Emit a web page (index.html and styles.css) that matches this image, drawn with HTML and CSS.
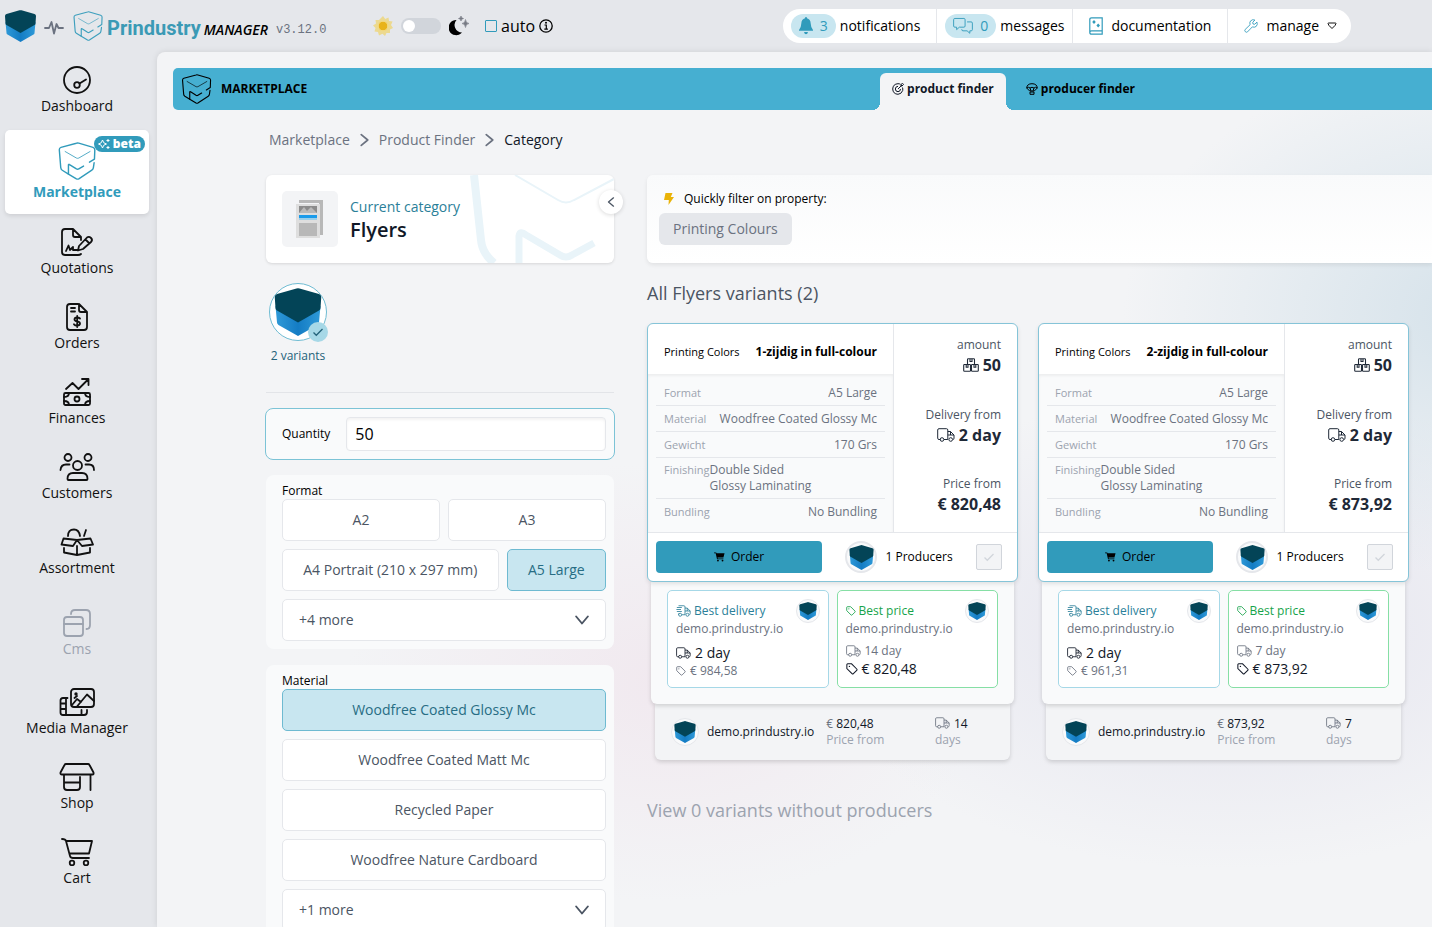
FILE: index.html
```html
<!DOCTYPE html>
<html lang="en">
<head>
    <meta charset="UTF-8">
    <meta name="viewport" content="width=device-width, initial-scale=1.0">
    <title>Prindustry Manager - Marketplace</title>
    <link rel="stylesheet" href="styles.css">
</head>
<body>
    <!-- shared icons -->
    <svg class="sprite" aria-hidden="true">
        <defs>
            <linearGradient id="blue" x1="0" y1="0" x2="1" y2="0">
                <stop offset="0" stop-color="#2f9ad8"/>
                <stop offset="0.5" stop-color="#147cc4"/>
                <stop offset="1" stop-color="#2f9ad8"/>
            </linearGradient>
        </defs>
        <symbol id="cube" viewBox="0 0 32 32">
            <path d="M1 12 L16 19 L31 12 L30 23 Q30 24 29 24.600 L16 32 L3 24.600 Q2 24 2 23 Z" fill="url(#blue)"/>
            <path d="M15 .3 Q16 0 17 .3 L30 4 Q31.500 4.500 31.500 6 L31 13.500 Q31 14.500 30 15 L16 23 L2 15 Q1 14.500 1 13.500 L.5 6 Q.5 4.500 2 4 Z" fill="#034457"/>
        </symbol>
        <symbol id="outline" viewBox="0 0 32 32">
            <g fill="none" stroke="currentColor" stroke-linejoin="round" stroke-linecap="round">
                <path d="M26.500 17 L30.700 14.500 L31 6.500 Q31 5 29.500 4.500 L17.500 1 Q16.500 .7 15.500 1 L2.500 4.500 Q1 5 1.100 6.500 L2.300 21.500 Q2.400 23 3.600 23.800 L8.800 27 V19.200 Q9 18.500 9.700 19 L15.500 22.700 Q16.500 23.300 17.500 22.700 L21.500 20.300" stroke-width="1.200"/>
                <path d="M30.400 17.500 L29.800 21.500 Q29.600 23 28.500 23.700 L17.500 31 Q16.500 31.500 15.500 31 L8.800 27" stroke-width="1.200"/>
                <path d="M6 8 L15.500 13.500 Q16.500 14 17.500 13.500 L27 8" stroke-width=".7"/>
            </g>
        </symbol>
        <symbol id="truck" viewBox="0 0 18 14">
            <path d="M3.500 11.500 H2 Q.7 11.500 .7 10.200 V2 Q.7 .7 2 .7 H9.500 Q10.800 .7 10.800 2 V11.500 H7 M10.800 3.500 H13.500 L17 7 V10.200 Q17 11.500 16 11.500 M10.800 7 H17 M13.500 3.500 V7" fill="none" stroke="currentColor"/>
            <circle cx="5" cy="11.500" r="1.800" fill="none" stroke="currentColor"/>
            <circle cx="13.700" cy="11.500" r="1.800" fill="none" stroke="currentColor"/>
        </symbol>
        <symbol id="fast" viewBox="0 0 18 14">
            <path d="M3 11.500 V10 M3 .7 H9.500 Q10.800 .7 10.800 2 V11.500 H7 M10.800 3.500 H13.500 L17 7 V10.200 Q17 11.500 16 11.500 M10.800 7 H17 M13.500 3.500 V7 M1 2.800 H7 M.5 5.200 H6 M1 7.600 H7" fill="none" stroke="currentColor"/>
            <circle cx="5" cy="11.500" r="1.800" fill="none" stroke="currentColor"/>
            <circle cx="13.700" cy="11.500" r="1.800" fill="none" stroke="currentColor"/>
        </symbol>
        <symbol id="tag" viewBox="0 0 14 14">
            <path d="M1 2 Q1 1 2 1 H6.500 L12.500 7 Q13.300 7.800 12.500 8.600 L8.600 12.500 Q7.800 13.300 7 12.500 L1 6.500 Z" fill="none" stroke="currentColor" stroke-width="1.200"/>
            <circle cx="4" cy="4" r=".8" fill="currentColor"/>
        </symbol>
        <symbol id="boxes" viewBox="0 0 16 14">
            <path d="M4.500 6 V1.500 Q4.500 .7 5.300 .7 H10.700 Q11.500 .7 11.500 1.500 V6 M7 .7 V3.500 H9 V.7 M1.500 6.500 H6.700 Q7.500 6.500 7.500 7.300 V12.500 Q7.500 13.300 6.700 13.300 H1.500 Q.7 13.300 .7 12.500 V7.300 Q.7 6.500 1.500 6.500 Z M3.200 6.500 V9.200 H5 V6.500 M9.300 6.500 H14.500 Q15.300 6.500 15.300 7.300 V12.500 Q15.300 13.300 14.500 13.300 H9.300 Q8.500 13.300 8.500 12.500 V7.300 Q8.500 6.500 9.300 6.500 Z M11 6.500 V9.200 H12.800 V6.500" fill="none" stroke="currentColor" stroke-width="1.100"/>
        </symbol>
        <symbol id="cart-solid" viewBox="0 0 12 10">
            <path d="M0 0 H2.400 L2.800 1 H11.500 L10.300 5.500 H3.900 L4.100 6.500 H10.300 V7.400 H3.300 L1.800 1 H0 Z" fill="currentColor"/>
            <circle cx="4.300" cy="8.900" r="1" fill="currentColor"/>
            <circle cx="9.300" cy="8.900" r="1" fill="currentColor"/>
        </symbol>
        <symbol id="check" viewBox="0 0 12 12">
            <path d="M1.500 6.500 L4.300 9.300 L10.500 3" fill="none" stroke="currentColor" stroke-width="1.300"/>
        </symbol>
        <symbol id="chevron" viewBox="0 0 12 12">
            <path d="M3 1 L9 6 L3 11" fill="none" stroke="currentColor" stroke-width="1.600" stroke-linecap="round" stroke-linejoin="round"/>
        </symbol>
    </svg>

    <header class="topbar">
        <div class="brand">
            <svg class="brand-cube"><use href="#cube"/></svg>
            <svg class="pulse" viewBox="0 0 20 16"><path d="M1 9 H5 L7.500 3 L10 14.500 L12.500 5 L14.500 9 H19" fill="none" stroke="currentColor" stroke-width="1.800" stroke-linejoin="round" stroke-linecap="round"/></svg>
            <svg class="brand-outline"><use href="#outline"/></svg>
            <span class="brand-name">Prindustry</span>
            <span class="brand-manager">MANAGER</span>
            <span class="version">v3.12.0</span>
        </div>
        <div class="theme">
            <svg class="sun" viewBox="0 0 20 20"><path d="M10 0 L12.200 3 L15.500 1.500 L16 5 L19.600 5.500 L18 9 L20 12 L17 13.500 L17 17 L13.500 17 L12 20 L9.500 17.700 L6 19.500 L5 16 L1.500 15.500 L2.500 12 L0 9.500 L3 7.500 L2.500 4 L6 4 Z" fill="#ecd98f"/><circle cx="10" cy="10" r="4.800" fill="#e8b31a" stroke="#f4dc88"/></svg>
            <input class="switch" type="checkbox" role="switch" aria-label="Dark mode">
            <svg class="moon" viewBox="0 0 20 20"><path d="M7.500 4 A7.600 7.600 0 1 0 13 16.500 A7.500 7.500 0 0 1 7.500 4 Z" fill="#000"/><path d="M16.500 3.500 Q16.800 7.200 20 7.500 Q16.800 7.800 16.500 11.500 Q16.200 7.800 13 7.500 Q16.200 7.200 16.500 3.500 Z M12 0 Q12.200 2.300 14.500 2.500 Q12.200 2.700 12 5 Q11.800 2.700 9.500 2.500 Q11.800 2.300 12 0 Z" fill="#777b84" stroke="#777b84" stroke-width=".6"/></svg>
            <label class="auto"><input type="checkbox">auto</label>
            <svg class="info" viewBox="0 0 14 14"><circle cx="7" cy="7" r="6.200" fill="none" stroke="#000" stroke-width="1.300"/><path d="M5.500 6 H7.300 V10 M5.300 10.200 H8.900" fill="none" stroke="#000" stroke-width="1.200"/><circle cx="7" cy="3.800" r="1" fill="#000"/></svg>
        </div>
        <nav class="tools">
            <a href="#" class="tool">
                <span class="count"><svg class="bell" viewBox="0 0 14 18"><path d="M7 0 Q8 0 8 1.300 Q11.500 2.300 11.700 6.500 Q11.900 11 14 13 V13.800 H0 V13 Q2.100 11 2.300 6.500 Q2.500 2.300 6 1.300 Q6 0 7 0 Z M5 15 H9 Q8.500 17.300 7 17.300 Q5.500 17.300 5 15 Z" fill="currentColor"/></svg>3</span>notifications
            </a>
            <a href="#" class="tool">
                <span class="count"><svg class="chat" viewBox="0 0 22 18"><path d="M2 .7 H12 Q13.300 .7 13.300 2 V9 Q13.300 10.300 12 10.300 H7 L4 13 V10.300 H2 Q.7 10.300 .7 9 V2 Q.7 .7 2 .7 Z M15.500 4.500 H20 Q21.300 4.500 21.300 5.800 V13 Q21.300 14.300 20 14.300 H18.500 V17 L15.500 14.300 H11 Q9.700 14.300 9.700 13 V12.500" fill="none" stroke="currentColor" stroke-linejoin="round"/></svg>0</span>messages
            </a>
            <a href="#" class="tool wide">
                <svg class="book" viewBox="0 0 14 18"><path d="M2.500 .8 H13.200 V17.200 H2.500 Q.8 17.200 .8 15.500 V2.500 Q.8 .8 2.500 .8 Z M.8 15.500 Q.8 13.800 2.500 13.800 H13.200" fill="none" stroke="currentColor" stroke-width="1.200"/><path d="M5 3 L6.800 5 L5 7 L3.200 5 Z M9.200 6.500 L11 8.500 L9.200 10.500 L7.400 8.500 Z" fill="currentColor"/></svg>documentation
            </a>
            <a href="#" class="tool wide">
                <svg class="wrench" viewBox="0 0 16 16"><path d="M14.800 3.500 L12.300 6 L10.300 5.700 L10 3.700 L12.500 1.200 Q9.500 0 7.500 2.200 Q6 4 7 6.500 L1.300 12 Q.3 13.200 1.500 14.500 Q2.800 15.700 4 14.700 L9.500 9 Q12 10 13.900 8.500 Q15.900 6.500 14.800 3.500 Z" fill="none" stroke="currentColor"/></svg>manage
                <svg class="caret" viewBox="0 0 10 8"><path d="M1 1.500 Q1 1 1.500 1 H8.500 Q9 1 9 1.500 Q9 3 5 6.500 Q1 3 1 1.500 Z" fill="none" stroke="#111"/></svg>
            </a>
        </nav>
    </header>

    <div class="layout">
        <nav class="sidebar">
            <a href="#" class="item"><svg viewBox="0 0 36 28"><circle cx="18" cy="14" r="13"/><circle cx="18" cy="19" r="2.800"/><path d="M20.500 17.500 L27 13.500"/></svg>Dashboard</a>
            <a href="#" class="item active"><span class="beta"><svg viewBox="0 0 12 12"><path d="M4.500 2 Q5 5.500 8.500 6 Q5 6.500 4.500 10 Q4 6.500 .5 6 Q4 5.500 4.500 2 Z M10 1 V4 M8.500 2.500 H11.500 M10 8 V11 M8.500 9.500 H11.500"/></svg>beta</span><svg class="market"><use href="#outline"/></svg>Marketplace</a>
            <a href="#" class="item"><svg viewBox="0 0 36 28"><path d="M22 26 Q21 27 19 27 H6 Q3 27 3 24 V4 Q3 1 6 1 H14 L22 9 V12 M14 1 V7 Q14 9 16 9 H22"/><path d="M20 18 L28 9.500 Q30 8 32 10 Q34 12 32 14 L24 21 L19 22.500 Z M26.500 11.500 L30 15"/><path d="M7 23 L9.500 17.500 L11 22 L14 19 V22 H19"/></svg>Quotations</a>
            <a href="#" class="item"><svg viewBox="0 0 36 28"><path d="M19 1 H11 Q8 1 8 4 V24 Q8 27 11 27 H25 Q28 27 28 24 V9 L20 1 V7 Q20 9 22 9 H28 M12 5 H16 M12 8.500 H16"/><path d="M21 15.500 Q20 14.500 18 14.500 Q15.500 14.500 15.500 16.500 Q15.500 18 18.300 18.300 Q21 18.700 21 20.500 Q21 22.500 18 22.500 Q16 22.500 15 21.300 M18.200 13 V24"/></svg>Orders</a>
            <a href="#" class="item"><svg viewBox="0 0 36 28"><path d="M7 11 L13.500 5 L19.500 11 L29 1.500 M23 1 H29.500 V7"/><rect x="5" y="15" width="26" height="12" rx="1.500"/><circle cx="18" cy="21" r="2.500"/><path d="M10 15 Q10 19 5 19 M10 27 Q10 23 5 23 M26 15 Q26 19 31 19 M26 27 Q26 23 31 23"/></svg>Finances</a>
            <a href="#" class="item"><svg viewBox="0 0 36 28"><circle cx="9" cy="4.500" r="3.500"/><circle cx="29" cy="4.500" r="3.500"/><circle cx="18.500" cy="12.500" r="4.500"/><path d="M8.500 26 Q8.500 20 14 20 H23 Q28.500 20 28.500 26 Q28.500 27 27.500 27 H9.500 Q8.500 27 8.500 26 Z M1.500 17 Q2 11.500 7 11.500 H10.500 M26.500 11.500 H30 Q35 11.500 35 17"/></svg>Customers</a>
            <a href="#" class="item"><svg viewBox="0 0 36 28"><path d="M18 12 L14 18 L2.500 16.500 L4.500 10.500 Z M18 12 L23 18 L34 16.500 L31.500 10.500 Z M5 20 V24.500 L18 27 L31 24.500 V20 M18 18 V27 M9 8 Q9 1.500 15 1.500 Q20 1.500 21 8 M25 8 L27 2"/></svg>Assortment</a>
            <a href="#" class="item cms"><svg viewBox="0 0 36 28"><rect x="5" y="8" width="19" height="19" rx="3"/><path d="M5 15 H24 M12 5 Q12 1 16 1 H27 Q31 1 31 5 V16 Q31 20 27.500 20"/></svg>Cms</a>
            <a href="#" class="item media"><svg viewBox="0 0 36 28"><rect x="12" y="1" width="23" height="18" rx="3"/><path d="M13 17 L18 11 L22 14 M18 18.500 L28 6.500 L35 13 M15.500 10 L18 8 M8.500 10 H4 Q1.500 10 1.500 12.500 V24.500 Q1.500 27 4 27 H25 Q28 27 28 24 V22 M7 10 V27 M1.500 15.500 H7 M1.500 21 H7 M22.500 22 V27"/><circle cx="17" cy="6" r=".8"/></svg>Media Manager</a>
            <a href="#" class="item"><svg viewBox="0 0 36 28"><path d="M7 1 H29 Q30 1 30.500 2 L34.500 9.500 Q35 11.500 33.500 11.500 H3 Q1 11.500 1.500 9.500 L5.500 2 Q6 1 7 1 Z M5 12 V24 Q5 27 8 27 H18 Q21 27 21 24 V14 M5 19.500 H21 M31.500 12 V27"/></svg>Shop</a>
            <a href="#" class="item"><svg viewBox="0 0 36 28"><path d="M3 1 Q6.500 1 7 3 L11 18 Q11.500 20 14 20 H30 M7.500 3 H33 L30 15.500 H10.500"/><circle cx="13" cy="25" r="2.300"/><circle cx="27" cy="25" r="2.300"/></svg>Cart</a>
        </nav>

        <main class="main">
            <div class="banner">
                <div class="banner-title"><svg><use href="#outline"/></svg>MARKETPLACE</div>
                <div class="tabs">
                    <a href="#" class="tab current"><svg viewBox="0 0 12 12"><path d="M10.500 4.500 Q11 6 10.700 7.500 Q9.500 11 6 11.300 Q1 11 .7 6 Q1 1 6 .7 Q7.500 .7 8.500 1.300 M8.500 6 Q8.500 8.500 6 8.700 Q3.400 8.500 3.300 6 Q3.500 3.500 6 3.300 M6 6 L10 2 M9 3 V1.500 L10.500 .3 L11.500 1.500 L10 3 Z"/></svg>product finder</a>
                    <a href="#" class="tab"><svg viewBox="0 0 12 12"><path d="M.7 5 Q1 .7 6 .7 Q11 .7 11.300 5 L8.300 8 H3.700 Z M.7 5 Q3 3.500 4 5 Q6 3.500 8 5 Q9.500 3.500 11.300 5 M4 5 L5 8 M8 5 L7 8 M4 9 H8 V11.300 H4 Z"/></svg>producer finder</a>
                </div>
            </div>

            <div class="content">
                <div class="crumbs">
                    <a href="#">Marketplace</a>
                    <svg><use href="#chevron"/></svg>
                    <a href="#">Product Finder</a>
                    <svg><use href="#chevron"/></svg>
                    <span>Category</span>
                </div>

                <div class="columns">
                    <aside class="filters">
                        <div class="category-wrap">
                            <div class="category">
                                <svg class="watermark" viewBox="0 0 144 88"><path d="M4 0 L11 65 Q12 78 24 88" fill="none" stroke="#e9f4f9" stroke-width="8"/><path d="M45 0 L88 25 Q96 30 104 25 L144 4" fill="none" stroke="#e9f4f9" stroke-width="2"/><path d="M49 90 V61 Q50 55 56 60 L90 80 Q96 84 102 80 L124 68" fill="none" stroke="#e9f4f9" stroke-width="7"/></svg>
                                <div class="thumb"><svg viewBox="0 0 28 38"><path d="M3 0 H27 V35 H23 V3 H3 Z" fill="#b8b8b8"/><rect y="4" width="24" height="34" fill="#dedede"/><rect x="3" y="6" width="18" height="7" fill="#8b8b8b"/><path d="M3 13 L8 7 L11 11 L15 7 L21 13 Z" fill="#b9b9b9"/><rect x="3" y="15" width="18" height="3" fill="#1a9bea"/><rect x="3" y="18" width="18" height="2" fill="#9ccfe9"/><rect x="3" y="23" width="18" height="13" fill="#b8b8b8"/></svg></div>
                                <div>
                                    <div class="category-label">Current category</div>
                                    <h1>Flyers</h1>
                                </div>
                            </div>
                            <button class="collapse" aria-label="Collapse"><svg><use href="#chevron"/></svg></button>
                        </div>

                        <button class="producer">
                            <span class="producer-logo"><svg><use href="#cube"/></svg><span class="tick"><svg><use href="#check"/></svg></span></span>
                            2 variants
                        </button>

                        <div class="quantity">
                            <label for="quantity">Quantity</label>
                            <input id="quantity" type="text" value="50">
                        </div>

                        <section class="panel">
                            <h2>Format</h2>
                            <div class="options">
                                <button>A2</button>
                                <button>A3</button>
                                <button>A4 Portrait (210 x 297 mm)</button>
                                <button class="selected">A5 Large</button>
                                <button class="more">+4 more<svg><use href="#chevron"/></svg></button>
                            </div>
                        </section>

                        <section class="panel">
                            <h2>Material</h2>
                            <div class="options">
                                <button class="full selected">Woodfree Coated Glossy Mc</button>
                                <button class="full">Woodfree Coated Matt Mc</button>
                                <button class="full">Recycled Paper</button>
                                <button class="full">Woodfree Nature Cardboard</button>
                                <button class="more">+1 more<svg><use href="#chevron"/></svg></button>
                            </div>
                        </section>
                    </aside>

                    <section class="results">
                        <div class="quick">
                            <p><svg viewBox="0 0 10 12"><path d="M1.500 0 H8.500 L6.800 4 H10 L4.500 12 L4.800 7 H0 Z" fill="#eab308"/></svg>Quickly filter on property:</p>
                            <button>Printing Colours</button>
                        </div>

                        <h2 class="heading">All Flyers variants (2)</h2>

                        <div class="cards">
                            <article>
                                <div class="card">
                                    <div class="card-body">
                                        <div class="specs">
                                            <div class="spec-top"><span>Printing Colors</span><b>1-zijdig in full-colour</b></div>
                                            <dl>
                                                <div><dt>Format</dt><dd>A5 Large</dd></div>
                                                <div><dt>Material</dt><dd>Woodfree Coated Glossy Mc</dd></div>
                                                <div><dt>Gewicht</dt><dd>170 Grs</dd></div>
                                                <div class="list"><dt>Finishing</dt><dd>Double Sided<br>Glossy Laminating</dd></div>
                                                <div><dt>Bundling</dt><dd>No Bundling</dd></div>
                                            </dl>
                                        </div>
                                        <div class="totals">
                                            <div>amount<b><svg class="boxes"><use href="#boxes"/></svg>50</b></div>
                                            <div>Delivery from<b><svg class="truck"><use href="#truck"/></svg>2 day</b></div>
                                            <div>Price from<b>€ 820,48</b></div>
                                        </div>
                                    </div>
                                    <div class="card-foot">
                                        <button class="order"><svg><use href="#cart-solid"/></svg>Order</button>
                                        <div class="producers"><span class="avatar large"><svg><use href="#cube"/></svg></span>1 Producers</div>
                                        <label class="pick"><input type="checkbox" aria-label="Compare variant 1"><svg><use href="#check"/></svg></label>
                                    </div>
                                </div>
                                <div class="best">
                                    <div class="offer delivery">
                                        <span class="avatar small"><svg><use href="#cube"/></svg></span>
                                        <div class="offer-title"><svg class="truck"><use href="#fast"/></svg>Best delivery</div>
                                        <div class="offer-host">demo.prindustry.io</div>
                                        <div class="strong"><svg class="truck"><use href="#truck"/></svg>2 day</div>
                                        <div class="weak"><svg class="tag"><use href="#tag"/></svg>€ 984,58</div>
                                    </div>
                                    <div class="offer price">
                                        <span class="avatar small"><svg><use href="#cube"/></svg></span>
                                        <div class="offer-title"><svg class="tag"><use href="#tag"/></svg>Best price</div>
                                        <div class="offer-host">demo.prindustry.io</div>
                                        <div class="weak"><svg class="truck"><use href="#truck"/></svg>14 day</div>
                                        <div class="strong"><svg class="tag"><use href="#tag"/></svg>€ 820,48</div>
                                    </div>
                                </div>
                                <div class="supplier">
                                    <span class="avatar"><svg><use href="#cube"/></svg></span>
                                    <span class="host">demo.prindustry.io</span>
                                    <span class="from"><i>€</i> 820,48<br><em>Price from</em></span>
                                    <span class="days"><svg class="truck"><use href="#truck"/></svg>14<br><em>days</em></span>
                                </div>
                            </article>

                            <article>
                                <div class="card">
                                    <div class="card-body">
                                        <div class="specs">
                                            <div class="spec-top"><span>Printing Colors</span><b>2-zijdig in full-colour</b></div>
                                            <dl>
                                                <div><dt>Format</dt><dd>A5 Large</dd></div>
                                                <div><dt>Material</dt><dd>Woodfree Coated Glossy Mc</dd></div>
                                                <div><dt>Gewicht</dt><dd>170 Grs</dd></div>
                                                <div class="list"><dt>Finishing</dt><dd>Double Sided<br>Glossy Laminating</dd></div>
                                                <div><dt>Bundling</dt><dd>No Bundling</dd></div>
                                            </dl>
                                        </div>
                                        <div class="totals">
                                            <div>amount<b><svg class="boxes"><use href="#boxes"/></svg>50</b></div>
                                            <div>Delivery from<b><svg class="truck"><use href="#truck"/></svg>2 day</b></div>
                                            <div>Price from<b>€ 873,92</b></div>
                                        </div>
                                    </div>
                                    <div class="card-foot">
                                        <button class="order"><svg><use href="#cart-solid"/></svg>Order</button>
                                        <div class="producers"><span class="avatar large"><svg><use href="#cube"/></svg></span>1 Producers</div>
                                        <label class="pick"><input type="checkbox" aria-label="Compare variant 2"><svg><use href="#check"/></svg></label>
                                    </div>
                                </div>
                                <div class="best">
                                    <div class="offer delivery">
                                        <span class="avatar small"><svg><use href="#cube"/></svg></span>
                                        <div class="offer-title"><svg class="truck"><use href="#fast"/></svg>Best delivery</div>
                                        <div class="offer-host">demo.prindustry.io</div>
                                        <div class="strong"><svg class="truck"><use href="#truck"/></svg>2 day</div>
                                        <div class="weak"><svg class="tag"><use href="#tag"/></svg>€ 961,31</div>
                                    </div>
                                    <div class="offer price">
                                        <span class="avatar small"><svg><use href="#cube"/></svg></span>
                                        <div class="offer-title"><svg class="tag"><use href="#tag"/></svg>Best price</div>
                                        <div class="offer-host">demo.prindustry.io</div>
                                        <div class="weak"><svg class="truck"><use href="#truck"/></svg>7 day</div>
                                        <div class="strong"><svg class="tag"><use href="#tag"/></svg>€ 873,92</div>
                                    </div>
                                </div>
                                <div class="supplier">
                                    <span class="avatar"><svg><use href="#cube"/></svg></span>
                                    <span class="host">demo.prindustry.io</span>
                                    <span class="from"><i>€</i> 873,92<br><em>Price from</em></span>
                                    <span class="days"><svg class="truck"><use href="#truck"/></svg>7<br><em>days</em></span>
                                </div>
                            </article>
                        </div>

                        <h2 class="heading muted">View 0 variants without producers</h2>
                    </section>
                </div>
            </div>
        </main>
    </div>
</body>
</html>
```
FILE: styles.css
```css
* {
    box-sizing: border-box;
}

body {
    font-family: "Open Sans", "Noto Sans", sans-serif;
    font-size: 14px;
    line-height: 20px;
    margin: 0;
    height: 100vh;
    display: flex;
    flex-direction: column;
    overflow: hidden;
    background-color: #e5e7eb;
    color: #111827;
}

a {
    color: inherit;
    text-decoration: none;
}

button, input {
    font: inherit;
    color: inherit;
}

button {
    cursor: pointer;
}

h1, h2, p, dl, dd {
    margin: 0;
}

svg {
    flex: none;
}

.sprite {
    position: absolute;
    width: 0;
    height: 0;
}

/* top bar */
.topbar {
    display: flex;
    align-items: center;
    flex: none;
    height: 52px;
    padding: 0 81px 0 4px;
}

.brand {
    display: flex;
    align-items: center;
    width: 369px;
}

.brand-cube {
    width: 33px;
    height: 32px;
}

.pulse {
    width: 20px;
    height: 16px;
    margin: 2px 8px 0 7px;
    color: #6b7280;
}

.brand-outline {
    width: 32px;
    height: 30px;
    color: #3d9fbd;
}

.brand-name {
    font-family: Roboto, sans-serif;
    font-size: 20px;
    font-weight: 700;
    color: #3b9ab5;
    margin: 4px 3px 0;
}

.brand-manager {
    font-weight: 600;
    font-style: italic;
    color: #000;
    margin-top: 8px;
}

.version {
    font-family: "Liberation Mono", monospace;
    font-size: 12px;
    color: #6b7280;
    margin: 8px 0 0 8px;
}

.theme {
    display: flex;
    align-items: center;
}

.sun, .moon {
    width: 20px;
    height: 20px;
}

.switch {
    appearance: none;
    width: 40px;
    height: 16px;
    margin: 0 8px;
    padding: 2px;
    border-radius: 8px;
    background-color: #d1d5db;
}

.switch::before {
    content: "";
    display: block;
    width: 12px;
    height: 12px;
    border-radius: 50%;
    background-color: #fff;
}

.auto {
    display: flex;
    align-items: center;
    font-size: 16px;
    margin: 0 4px 0 16px;
    color: #000;
}

.auto input {
    appearance: none;
    width: 12px;
    height: 12px;
    margin: 0 4px 0 0;
    border: 1px solid #319bbb;
    border-radius: 1px;
}

.info {
    width: 14px;
    height: 14px;
}

.tools {
    display: flex;
    height: 34px;
    margin-left: auto;
    border-radius: 17px;
    background-color: #fff;
    overflow: hidden;
}

.tool {
    display: flex;
    align-items: center;
    padding: 0 8px;
    color: #000;
}

.tool:first-child {
    padding-right: 16px;
}

.tool + .tool {
    border-left: 1px solid #e5e7eb;
}

.tool.wide {
    padding: 0 16px;
}

.tool.wide:last-child {
    padding-right: 14px;
}

.count {
    display: flex;
    align-items: center;
    gap: 7px;
    height: 24px;
    padding: 0 8px;
    margin-right: 4px;
    border-radius: 12px;
    background-color: #c8e6f0;
    color: #319bbb;
}

.bell {
    width: 14px;
    height: 18px;
}

.chat {
    width: 20px;
    height: 18px;
}

.book, .wrench {
    width: 14px;
    height: 18px;
    margin-right: 8px;
    color: #319bbb;
}

.caret {
    width: 10px;
    height: 8px;
    margin-left: 8px;
}

.layout {
    display: flex;
    flex: 1;
    min-height: 0;
}

/* side navigation */
.sidebar {
    flex: none;
    width: 157px;
    padding: 2px 8px 0 5px;
}

.item {
    position: relative;
    display: flex;
    flex-direction: column;
    align-items: center;
    height: 75px;
    padding-top: 12px;
    line-height: 24px;
    color: #111;
}

.item > svg {
    width: 36px;
    height: 28px;
    fill: none;
    stroke: currentColor;
    stroke-width: 1.800;
    stroke-linecap: round;
    stroke-linejoin: round;
}

.item.active {
    height: 84px;
    margin: 1px 0 2px;
    border-radius: 5px;
    background-color: #fff;
    box-shadow: 0 2px 4px rgba(0, 0, 0, 0.1);
    font-weight: 700;
    color: #319bbb;
}

.item > svg.market {
    width: 38px;
    height: 38px;
}

.beta {
    position: absolute;
    top: 6px;
    right: 4px;
    display: flex;
    align-items: center;
    gap: 3px;
    padding: 0 4px;
    border-radius: 8px;
    background-color: #319bbb;
    color: #fff;
    font-size: 12px;
    font-weight: 800;
    line-height: 16px;
}

.beta svg {
    width: 12px;
    height: 12px;
    fill: none;
    stroke: #fff;
}

.item.cms {
    margin-top: 6px;
    color: #9ca3af;
}

.item.media {
    margin-top: 4px;
}

/* main area */
.main {
    flex: 1;
    min-width: 0;
    padding: 16px 0 0 16px;
    overflow: hidden;
    border-top-left-radius: 8px;
    background-color: #f3f4f6;
    background-image:
        radial-gradient(ellipse 360px 260px at 104% 30%, rgba(200, 218, 229, 0.7), transparent),
        radial-gradient(ellipse 420px 240px at 84% 66%, rgba(222, 221, 235, 0.7), transparent),
        radial-gradient(ellipse 320px 220px at 40% 72%, rgba(240, 228, 236, 0.7), transparent);
    box-shadow: 0 0 6px rgba(0, 0, 0, 0.1);
}

.banner {
    display: flex;
    height: 42px;
    border-radius: 5px 0 0 5px;
    background-color: #46afd1;
    color: #000;
    font-size: 12px;
    font-weight: 700;
}

.banner-title {
    display: flex;
    align-items: center;
    flex: 0 0 56%;
    padding-left: 8px;
    gap: 9px;
}

.banner-title svg {
    width: 31px;
    height: 30px;
}

.tabs {
    display: flex;
    align-items: flex-end;
    gap: 8px;
    padding-left: 2px;
}

.tab {
    position: relative;
    display: flex;
    align-items: center;
    gap: 3px;
    height: 37px;
    padding: 0 12px 6px;
}

.tab svg {
    width: 12px;
    height: 12px;
    fill: none;
    stroke: currentColor;
}

.tab.current {
    border-radius: 6px 6px 0 0;
    background-color: #f3f4f6;
    color: #111827;
}

.tab.current::before,
.tab.current::after {
    content: "";
    position: absolute;
    bottom: 0;
    width: 8px;
    height: 8px;
}

.tab.current::before {
    right: 100%;
    background: radial-gradient(circle at 0 0, transparent 8px, #f3f4f6 8px);
}

.tab.current::after {
    left: 100%;
    background: radial-gradient(circle at 100% 0, transparent 8px, #f3f4f6 8px);
}

.content {
    padding: 20px 0 0 93px;
}

.crumbs {
    display: flex;
    align-items: center;
    gap: 8px;
    padding-left: 3px;
    color: #6b7280;
}

.crumbs svg {
    width: 13px;
    height: 14px;
}

.crumbs span {
    color: #111827;
    font-weight: 500;
}

.columns {
    display: flex;
    gap: 33px;
    padding-top: 25px;
}

.filters {
    flex: none;
    width: 348px;
}

.category-wrap {
    position: relative;
}

.category {
    position: relative;
    display: flex;
    align-items: center;
    gap: 12px;
    height: 88px;
    padding: 0 16px;
    overflow: hidden;
    border-radius: 6px;
    background-color: #fff;
    box-shadow: 0 1px 3px rgba(0, 0, 0, 0.12);
}

.watermark {
    position: absolute;
    top: 0;
    right: 0;
    width: 144px;
    height: 88px;
}

.thumb {
    display: flex;
    align-items: center;
    justify-content: center;
    width: 56px;
    height: 56px;
    border-radius: 5px;
    background-color: #f3f4f6;
}

.thumb svg {
    width: 28px;
    height: 38px;
}

.category-label {
    padding-top: 2px;
    color: #2b7f99;
    font-weight: 500;
}

.category h1 {
    font-size: 20px;
    font-weight: 600;
    line-height: 26px;
}

.collapse {
    position: absolute;
    top: 15px;
    right: -9px;
    display: flex;
    align-items: center;
    justify-content: center;
    width: 24px;
    height: 24px;
    padding: 0;
    border: 0;
    border-radius: 50%;
    background-color: #fff;
    box-shadow: 0 1px 4px rgba(0, 0, 0, 0.15);
    color: #4b5563;
}

.collapse svg {
    width: 10px;
    height: 12px;
    transform: rotate(180deg);
}

.producer {
    display: flex;
    flex-direction: column;
    align-items: center;
    gap: 7px;
    margin: 20px 0 44px 3px;
    padding: 0;
    border: 0;
    background: none;
    color: #24627a;
    font-size: 12px;
    font-weight: 500;
    line-height: 16px;
}

.producer-logo {
    position: relative;
    display: flex;
    align-items: center;
    justify-content: center;
    width: 58px;
    height: 58px;
    border: 1px solid #6fbcd3;
    border-radius: 50%;
    background-color: #fff;
}

.producer-logo > svg {
    width: 48px;
    height: 48px;
}

.tick {
    position: absolute;
    right: -2px;
    bottom: -2px;
    display: flex;
    align-items: center;
    justify-content: center;
    width: 20px;
    height: 20px;
    border-radius: 50%;
    background-color: #a6d8e7;
}

.tick svg {
    width: 12px;
    height: 12px;
}

.quantity {
    position: relative;
    display: flex;
    align-items: center;
    gap: 16px;
    margin: 0 -1px 15px;
    padding: 8px;
    padding-left: 16px;
    border: 1px solid #7cc3d6;
    border-radius: 8px;
    background-color: #f9fafb;
    color: #000;
    font-size: 12px;
    font-weight: 500;
}

/* rule between the producer and the form */
.quantity::before {
    content: "";
    position: absolute;
    top: -17px;
    left: 0;
    right: 0;
    border-top: 1px solid #e2e4e8;
}

.quantity input {
    flex: 1;
    min-width: 0;
    height: 34px;
    padding: 0 8px;
    border: 1px solid #e5e7eb;
    border-radius: 4px;
    background-color: #fff;
    box-shadow: inset 0 2px 3px rgba(0, 0, 0, 0.05);
    font-size: 16px;
    font-weight: 400;
}

.panel {
    margin-bottom: 16px;
    padding: 8px 8px 8px 16px;
    border-radius: 8px;
    background-color: #f9fafb;
}

.panel h2 {
    color: #000;
    font-size: 12px;
    font-weight: 500;
    line-height: 16px;
}

.options {
    display: flex;
    flex-wrap: wrap;
    gap: 8px;
}

.options button {
    flex: 1 1 auto;
    min-width: 80px;
    height: 42px;
    padding: 0 18px;
    border: 1px solid #e5e7eb;
    border-radius: 5px;
    background-color: #fff;
    color: #4b5563;
}

.options button.full {
    flex-basis: 100%;
}

.options button.more {
    display: flex;
    align-items: center;
    justify-content: space-between;
    flex-basis: 100%;
    padding: 0 16px;
}

.options .more svg {
    width: 14px;
    height: 14px;
    transform: rotate(90deg);
}

.options button.selected {
    border-color: #6ebad1;
    background-color: #c8e6f0;
    color: #276d84;
}

/* results */
.results {
    flex: 1;
    min-width: 0;
}

.quick {
    height: 88px;
    padding: 16px 12px;
    border-radius: 6px 0 0 6px;
    background-image: linear-gradient(#f9fafb, #fff);
    box-shadow: 0 2px 4px rgba(0, 0, 0, 0.08);
}

.quick p {
    display: flex;
    align-items: center;
    gap: 10px;
    padding-left: 5px;
    margin-bottom: 6px;
    color: #000;
    font-size: 12px;
    font-weight: 500;
    line-height: 16px;
}

.quick p svg {
    width: 10px;
    height: 12px;
}

.quick button {
    height: 32px;
    padding: 0 14px;
    border: 0;
    border-radius: 6px;
    background-color: #e5e7eb;
    color: #6b7280;
}

.heading {
    margin: 16px 0;
    color: #4b5563;
    font-size: 18px;
    font-weight: 500;
    line-height: 28px;
}

.heading.muted {
    margin-top: 36px;
    color: #9ca3af;
}

.cards {
    display: grid;
    grid-template-columns: 1fr 1fr;
    gap: 20px;
    padding-right: 23px;
    font-size: 12px;
    line-height: 16px;
}

.card {
    position: relative;
    z-index: 2;
    border: 1px solid #85c4d8;
    border-radius: 6px;
    background-color: #fff;
    box-shadow: 0 2px 4px rgba(0, 0, 0, 0.1);
    overflow: hidden;
}

.card-body {
    display: grid;
    grid-template-columns: 2fr 1fr;
}

.specs {
    border-right: 1px solid #e5e7eb;
}

.spec-top {
    display: flex;
    align-items: center;
    justify-content: space-between;
    height: 50px;
    padding: 6px 16px 0;
    color: #000;
    white-space: nowrap;
}

.spec-top span {
    font-size: 11px;
    font-weight: 500;
}

.specs dl {
    padding: 6px 8px 8px;
    background-color: #f9fafb;
    box-shadow: inset 0 2px 3px rgba(0, 0, 0, 0.05);
}

.specs dl div {
    display: flex;
    justify-content: space-between;
    padding: 5px 8px 4px;
    color: #6b7280;
    white-space: nowrap;
}

.specs dl div + div {
    border-top: 1px solid #e5e7eb;
}

.specs dl div.list {
    justify-content: flex-start;
    padding-top: 4px;
}

.specs dt {
    color: #9ca3af;
    font-size: 11px;
    font-weight: 500;
}

.totals {
    display: flex;
    flex-direction: column;
    justify-content: space-between;
    padding: 13px 16px 16px;
    color: #4b5563;
    text-align: right;
    white-space: nowrap;
}

.totals b {
    display: flex;
    align-items: center;
    justify-content: flex-end;
    gap: 4px;
    color: #1f2937;
    font-size: 16px;
    line-height: 24px;
}

.boxes {
    width: 16px;
    height: 14px;
}

.truck {
    width: 18px;
    height: 14px;
}

.card-foot {
    display: flex;
    align-items: center;
    justify-content: space-between;
    padding: 8px 15px 8px 8px;
    border-top: 1px solid #e5e7eb;
    color: #000;
}

.order {
    display: flex;
    align-items: center;
    justify-content: center;
    gap: 6px;
    width: 48%;
    height: 32px;
    border: 0;
    border-radius: 4px;
    background-color: #319bbb;
    color: #000;
}

.order svg {
    width: 11px;
    height: 10px;
}

.producers {
    display: flex;
    align-items: center;
    gap: 8px;
}

.avatar {
    display: flex;
    align-items: center;
    justify-content: center;
    flex: none;
    width: 28px;
    height: 28px;
    border: 1px solid #e5e7eb;
    border-radius: 50%;
    background-color: #f9fafb;
}

.avatar svg {
    width: 22px;
    height: 22px;
}

.avatar.large {
    width: 32px;
    height: 32px;
    border-width: 2px;
}

.avatar.large svg {
    width: 25px;
    height: 25px;
}

.avatar.small {
    position: absolute;
    top: 8px;
    right: 8px;
    width: 24px;
    height: 24px;
}

.avatar.small svg {
    width: 18px;
    height: 18px;
}

.pick {
    display: grid;
    place-items: center;
    color: #d1d5db;
}

.pick input {
    appearance: none;
    grid-area: 1 / 1;
    width: 26px;
    height: 26px;
    margin: 0;
    border: 1px solid #d1d5db;
    border-radius: 2px;
    background-color: #f3f4f6;
}

.pick svg {
    grid-area: 1 / 1;
    z-index: 1;
    width: 12px;
    height: 12px;
}

.best {
    position: relative;
    z-index: 1;
    display: grid;
    grid-template-columns: 1fr 1fr;
    gap: 8px;
    margin: 0 4px;
    padding: 8px 16px 16px;
    border-radius: 0 0 6px 6px;
    background-color: #f9fafb;
    box-shadow: 0 2px 4px rgba(0, 0, 0, 0.15);
}

.offer {
    position: relative;
    padding: 12px 8px 8px;
    border: 1px solid #a6d8e7;
    border-radius: 5px;
    background-color: #fff;
    color: #6b7280;
    white-space: nowrap;
}

.offer.price {
    border-color: #86dfa5;
}

.offer > div {
    display: flex;
    align-items: center;
    gap: 4px;
}

.offer .truck {
    width: 15px;
    height: 12px;
}

.offer .tag {
    width: 10px;
    height: 10px;
}

.offer > .offer-title {
    gap: 3px;
    color: #2b7f99;
}

.offer.price > .offer-title {
    color: #16a34a;
}

.offer > .offer-host {
    margin: 2px 0 6px;
}

.offer .strong {
    color: #111827;
    font-size: 14px;
    line-height: 20px;
}

.offer .strong .tag {
    width: 12px;
    height: 12px;
}

.supplier {
    display: flex;
    align-items: center;
    height: 56px;
    margin: 0 8px;
    padding: 0 16px;
    border-radius: 0 0 6px 6px;
    background-color: #f3f4f6;
    box-shadow: 0 2px 4px rgba(0, 0, 0, 0.15);
    color: #111827;
    white-space: nowrap;
}

.host {
    margin: 0 12px 0 8px;
    font-weight: 500;
}

.from {
    flex: 1;
}

.supplier i, .supplier em {
    font-style: normal;
    color: #6b7280;
}

.supplier em {
    color: #9ca3af;
}

.days {
    width: 59px;
}

.days .truck {
    width: 15px;
    height: 12px;
    margin-right: 4px;
    color: #6b7280;
    vertical-align: -1px;
}
```
